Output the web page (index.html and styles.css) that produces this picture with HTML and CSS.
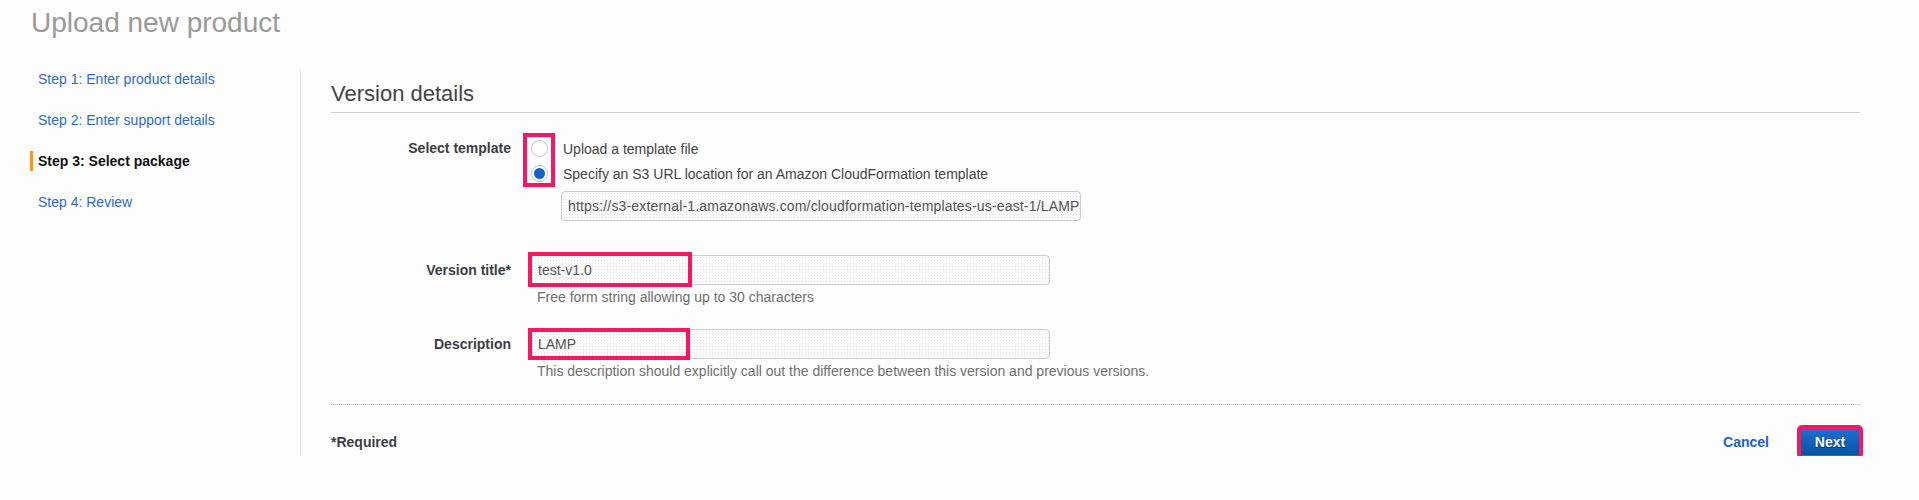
FILE: index.html
```html
<!DOCTYPE html>
<html lang="en">
<head>
<meta charset="utf-8">
<title>Upload new product</title>
<link rel="stylesheet" href="styles.css">
</head>
<body>
<div class="page">
  <h1 class="page-title">Upload new product</h1>
  <div class="layout">
    <nav class="steps">
      <a class="step">Step 1: Enter product details</a>
      <a class="step">Step 2: Enter support details</a>
      <span class="step active">Step 3: Select package</span>
      <a class="step">Step 4: Review</a>
    </nav>
    <main class="panel">
      <h2 class="section-title">Version details</h2>
      <div class="form">
        <div class="row row-template">
          <div class="label label-tall">Select template</div>
          <div class="control">
            <div class="options">
              <div class="option"><span class="radio"></span><span class="option-text">Upload a template file</span></div>
              <div class="option"><span class="radio checked"></span><span class="option-text">Specify an S3 URL location for an Amazon CloudFormation template</span></div>
              <span class="highlight hl-radios"></span>
            </div>
            <div class="field field-url"><span class="field-text url-text">https://s3-external-1.amazonaws.com/cloudformation-templates-us-east-1/LAMP</span></div>
          </div>
        </div>
        <div class="row row-title">
          <div class="label label-field">Version title*</div>
          <div class="control">
            <div class="field field-wide"><span class="field-text">test-v1.0</span><span class="highlight hl-title"></span></div>
            <div class="help">Free form string allowing up to 30 characters</div>
          </div>
        </div>
        <div class="row row-desc">
          <div class="label label-field">Description</div>
          <div class="control">
            <div class="field field-wide"><span class="field-text">LAMP</span><span class="highlight hl-desc"></span></div>
            <div class="help">This description should explicitly call out the difference between this version and previous versions.</div>
          </div>
        </div>
      </div>
      <div class="footer">
        <span class="required">*Required</span>
        <div class="actions">
          <a class="cancel">Cancel</a>
          <button class="btn-next" type="button">Next</button>
        </div>
      </div>
    </main>
  </div>
</div>
</body>
</html>
```
FILE: styles.css
```css
html, body {
  margin: 0;
  padding: 0;
  background: #fcfdfc;
  font-family: "Liberation Sans", Arial, sans-serif;
  font-size: 14px;
  color: #444;
}

.page {
  width: 1919px;
}

.page-title {
  margin: 0;
  padding: 7px 0 0 31px;
  font-size: 28px;
  line-height: 32px;
  font-weight: normal;
  color: #9a9a9a;
}

.layout {
  display: flex;
  margin-top: 30px;
}

.steps {
  box-sizing: border-box;
  width: 301px;
  flex: none;
  border-right: 1px solid #e6e2d3;
  display: flex;
  flex-direction: column;
  gap: 21px;
}

.step {
  display: block;
  margin-left: 30px;
  padding-left: 5px;
  border-left: 3px solid transparent;
  line-height: 20px;
  color: #2f6bc8;
  text-decoration: none;
}

.step.active {
  border-left-color: #ff9900;
  font-weight: bold;
  color: #111;
}

.panel {
  flex: 1;
  padding: 12px 59px 0 30px;
}

.section-title {
  margin: 0;
  font-size: 22px;
  line-height: 26px;
  font-weight: normal;
  color: #444;
  padding-bottom: 5px;
  border-bottom: 1px solid #cfcfcf;
}

.form {
  margin-top: 23px;
}

.row {
  display: flex;
  gap: 19px;
}

.row-title {
  margin-top: 34px;
}

.row-desc {
  margin-top: 22px;
}

.label {
  width: 180px;
  flex: none;
  text-align: right;
  font-weight: bold;
  color: #3d3d45;
}

.label-tall {
  line-height: 25px;
}

.label-field {
  line-height: 30px;
}

.control {
  display: flex;
  flex-direction: column;
}

.options {
  position: relative;
}

.option {
  display: flex;
  align-items: center;
  height: 25px;
}

.radio {
  box-sizing: border-box;
  width: 17px;
  height: 17px;
  margin-left: 1px;
  border: 1px solid #c4c4c4;
  border-radius: 50%;
  background: #fff;
  display: flex;
  align-items: center;
  justify-content: center;
}

.radio.checked::after {
  content: "";
  width: 11px;
  height: 11px;
  border-radius: 50%;
  background: #1560c2;
}

.option-text {
  margin-left: 15px;
  color: #444;
}

.field {
  position: relative;
  box-sizing: border-box;
  height: 30px;
  border: 1px solid #cccccc;
  border-radius: 4px;
  background-color: #fafafa;
  background-image: radial-gradient(circle, #e6e6e6 0.6px, transparent 0.8px);
  background-size: 3px 3px;
  display: flex;
  align-items: center;
  padding-left: 7px;
  white-space: nowrap;
}

.field-text {
  color: #555;
}

.url-text {
  letter-spacing: 0.17px;
}

.field-url {
  width: 520px;
  margin-top: 5px;
  margin-left: 31px;
  padding-left: 6px;
}

.field-wide {
  width: 520px;
}

.help {
  margin-top: 2px;
  line-height: 20px;
  padding-left: 7px;
  color: #707070;
}

.highlight {
  position: absolute;
  box-sizing: border-box;
  border: 4px solid #f5175f;
  pointer-events: none;
}

.hl-radios {
  left: -7px;
  top: -3px;
  width: 32px;
  height: 54px;
}

.hl-title {
  left: -3px;
  top: -4px;
  width: 164px;
  height: 35px;
}

.hl-desc {
  left: -3px;
  top: -2px;
  width: 162px;
  height: 32px;
}

.footer {
  margin-top: 23px;
  border-top: 1px dotted #bdbdbd;
  padding-top: 23px;
  display: flex;
  align-items: center;
  justify-content: space-between;
}

.required {
  font-weight: bold;
  color: #3d3d4a;
  line-height: 20px;
}

.actions {
  display: flex;
  align-items: center;
  gap: 31px;
}

.cancel {
  font-weight: bold;
  color: #2063c4;
  text-decoration: none;
}

.btn-next {
  box-sizing: border-box;
  height: 28px;
  width: 60px;
  padding: 0;
  border: 1px solid #0b4f9e;
  border-radius: 2px;
  background: linear-gradient(#1e6fcf, #0752a8);
  color: #fff;
  font-family: "Liberation Sans", Arial, sans-serif;
  font-size: 14px;
  font-weight: bold;
  text-shadow: 0 1px 1px rgba(0, 0, 0, 0.6);
  outline: 4px solid #f5175f;
  outline-offset: -1px;
}
```
